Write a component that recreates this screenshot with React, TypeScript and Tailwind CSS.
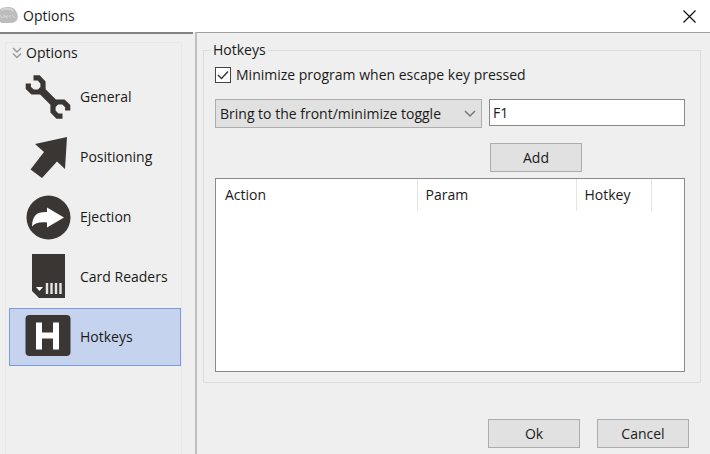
import { useState } from 'react'
import type { ReactNode } from 'react'

interface Section {
  id: string
  label: string
  icon: ReactNode
}

const sections: Section[] = [
  {
    id: 'general',
    label: 'General',
    icon: (
      <svg viewBox="0 0 46 46" className="h-[46px] w-[46px]" fill="none" stroke="#3a3634" aria-hidden="true">
        <path d="M15.500 15.500 L30.500 30.500" strokeWidth="7.500" />
        <path d="M8.500 3.800 H13.500 L18 8.500 V14 L14 18 H7.500 L3.300 14 V9.500" strokeWidth="5.200" />
        <path d="M37.500 42.200 H32.500 L28 37.500 V32 L32 28 H38.500 L42.700 32 V36.500" strokeWidth="5.200" />
      </svg>
    ),
  },
  {
    id: 'positioning',
    label: 'Positioning',
    icon: (
      <svg viewBox="0 0 46 46" className="h-[46px] w-[46px]" aria-hidden="true">
        <path d="M42 3 L40 35 L32 27.500 L17 44 L5.500 35.500 L19 18 L10 10 Z" fill="#3a3634" />
      </svg>
    ),
  },
  {
    id: 'ejection',
    label: 'Ejection',
    icon: (
      <svg viewBox="0 0 46 46" className="h-[46px] w-[46px]" aria-hidden="true">
        <circle cx="23.5" cy="23.5" r="22" fill="#3a3634" />
        <path d="M7 32.500 C7.500 21 12 17.500 22 18 V13.500 L39 23.500 L22 33.500 V28.500 C15 28 10 28.500 7 32.500 Z" fill="#fff" />
      </svg>
    ),
  },
  {
    id: 'card-readers',
    label: 'Card Readers',
    icon: (
      <svg viewBox="0 0 46 46" className="h-[46px] w-[46px]" aria-hidden="true">
        <path d="M7 0 H40 V44 H14 L7 37 Z" fill="#3a3634" />
        <path d="M11 33 H18 L14.500 37 Z" fill="#fff" />
        <path d="M22 29 V40 M26.500 29 V40 M31 29 V40 M35.500 29 V40" stroke="#e4e4e4" strokeWidth="2.4" />
      </svg>
    ),
  },
  {
    id: 'hotkeys',
    label: 'Hotkeys',
    icon: (
      <svg viewBox="0 0 46 46" className="h-[46px] w-[46px]" aria-hidden="true">
        <rect x="0.500" y="1" width="45" height="41" rx="4" fill="#3a3634" />
        <path d="M14 8.500 V35.500 M31 8.500 V35.500 M14 21.500 H31" stroke="#fff" strokeWidth="6" />
      </svg>
    ),
  },
]

const buttonClass =
  'h-[29px] w-[92px] border border-[#adadad] bg-[#e1e1e1] text-center hover:border-[#0078d7] hover:bg-[#e5f1fb]'

function TitleBar() {
  return (
    <header className="flex h-8 shrink-0 items-center justify-between bg-white pr-2.5">
      <div className="flex items-center gap-[5px]">
        <svg viewBox="0 0 18 18" className="h-[18px] w-[18px]" aria-hidden="true">
          <path d="M0 2 Q3 0 8 0 Q14 0 16 4 Q19 9 17 13 Q15 16 10 16 H2 L0 15 Z" fill="#bcbcbc" />
          <path d="M1 3 Q8 0 14 4" stroke="#d2d2d2" strokeWidth="2" fill="none" />
          <path d="M0 8 L2 11 M4 11 V8 L7 11 V8 M10 8 V11 M12 8 L15 11" stroke="#dadada" strokeWidth="1" fill="none" />
        </svg>
        <h1>Options</h1>
      </div>
      <button type="button" aria-label="Close" className="p-1">
        <svg viewBox="0 0 13 13" className="h-[13px] w-[13px]" aria-hidden="true">
          <path d="M0.500 0.500 L12.500 12.500 M12.500 0.500 L0.500 12.500" stroke="#111" strokeWidth="1.200" />
        </svg>
      </button>
    </header>
  )
}

function Sidebar({ active, onSelect }: { active: string; onSelect: (id: string) => void }) {
  return (
    <nav className="w-[193px] shrink-0 border-t-2 border-[#828282] pt-2 pl-[5px]">
      <div className="mr-[11px] h-full border-x border-t border-[#e8e8e8] pl-[3px]">
        <div className="flex h-5 items-center gap-1 pl-[3px]">
          <svg viewBox="0 0 10 12" className="h-3 w-2.5" fill="none" stroke="#999" strokeWidth="1.400" aria-hidden="true">
            <path d="M1 1 L5 5 L9 1 M1 6.500 L5 10.500 L9 6.500" />
          </svg>
          <h2>Options</h2>
        </div>
        <ul className="mt-[5px] flex flex-col gap-0.5">
          {sections.map((section) => (
            <li key={section.id}>
              <button
                type="button"
                onClick={() => onSelect(section.id)}
                className={`flex h-[58px] w-full items-center gap-[9px] border pl-[15px] ${
                  active === section.id ? 'border-[#7b9bd8] bg-[#c5d3ee]' : 'border-transparent'
                }`}
              >
                {section.icon}
                {section.label}
              </button>
            </li>
          ))}
        </ul>
      </div>
    </nav>
  )
}

function HotkeysPanel() {
  const [minimize, setMinimize] = useState(true)
  const [hotkey, setHotkey] = useState('F1')

  return (
    <fieldset className="flex min-w-0 flex-1 flex-col border border-[#dcdcdc] pr-[15px] pb-2.5 pl-[11px]">
      <legend className="-ml-1 px-0.5 leading-5">Hotkeys</legend>

      <label className="mt-[5px] flex h-5 items-center gap-[5px] self-start">
        <span className="relative flex">
          <input
            type="checkbox"
            checked={minimize}
            onChange={(e) => setMinimize(e.target.checked)}
            className="h-4 w-4 appearance-none border border-[#444] bg-white"
          />
          {minimize && (
            <svg viewBox="0 0 16 16" className="pointer-events-none absolute inset-0 h-4 w-4" aria-hidden="true">
              <path d="M3 8 L6.500 11.500 L13 4.500" fill="none" stroke="#333" strokeWidth="1.400" />
            </svg>
          )}
        </span>
        Minimize program when escape key pressed
      </label>

      {/* Action and key */}
      <div className="mt-3.5 flex items-start gap-[7px]">
        <div className="relative w-[267px] shrink-0">
          <select
            aria-label="Action"
            className="h-[29px] w-full appearance-none border border-[#adadad] bg-[#e1e1e1] pl-1 pr-6"
          >
            <option>Bring to the front/minimize toggle</option>
          </select>
          <svg viewBox="0 0 12 8" className="pointer-events-none absolute top-[11px] right-1.5 h-2 w-3" aria-hidden="true">
            <path d="M1 1 L6 6 L11 1" fill="none" stroke="#777" strokeWidth="1.500" />
          </svg>
        </div>
        <input
          type="text"
          aria-label="Hotkey"
          value={hotkey}
          onChange={(e) => setHotkey(e.target.value)}
          className="h-[27px] min-w-0 flex-1 border border-[#8a8a8a] bg-white px-[3px]"
        />
      </div>

      <button type="button" className={`${buttonClass} mt-[15px] mb-1.5 ml-[275px]`}>
        Add
      </button>

      {/* Hotkey list */}
      <div className="flex-1 border border-[#8a8a8a] bg-white">
        <table className="w-full table-fixed text-left">
          <thead>
            <tr className="h-8">
              <th className="w-[201px] border-r border-[#e5e5e5] pl-[9px] font-normal">Action</th>
              <th className="w-[159px] border-r border-[#e5e5e5] px-2 font-normal">Param</th>
              <th className="w-[75px] border-r border-[#e5e5e5] px-2 font-normal">Hotkey</th>
              <td />
            </tr>
          </thead>
          <tbody />
        </table>
      </div>
    </fieldset>
  )
}

export default function App() {
  const [active, setActive] = useState('hotkeys')

  return (
    <div className="flex min-h-screen flex-col bg-[#efefef] font-['Open_Sans','Noto_Sans',sans-serif] text-sm text-[#1a1a1a]">
      <TitleBar />
      <div className="flex flex-1">
        <Sidebar active={active} onSelect={setActive} />
        <main className="ml-0.5 flex min-w-0 flex-1 flex-col border-t border-l-2 border-t-[#a0a0a0] border-l-[#c0c0c0] pt-[7px] pr-[9px] pl-1.5">
          <HotkeysPanel />
          <footer className="flex shrink-0 justify-end gap-[17px] pt-9 pr-3 pb-1.5">
            <button type="button" className={buttonClass}>
              Ok
            </button>
            <button type="button" className={buttonClass}>
              Cancel
            </button>
          </footer>
        </main>
      </div>
    </div>
  )
}
